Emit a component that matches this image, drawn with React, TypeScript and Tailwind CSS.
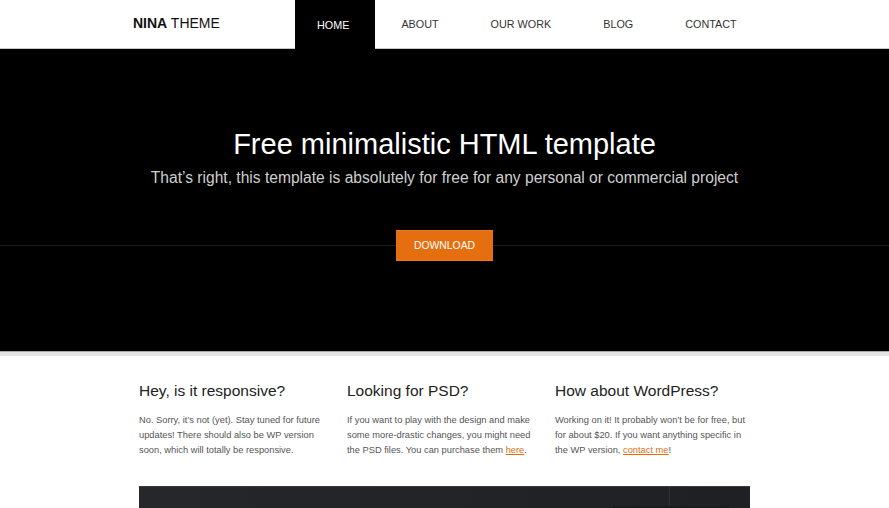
import React from 'react';

const navItems = ['Home', 'About', 'Our Work', 'Blog', 'Contact'];

const columns = [
  {
    title: 'Hey, is it responsive?',
    body: (
      <>No. Sorry, it’s not (yet). Stay tuned for future updates! There should also be WP version soon, which will totally be responsive.</>
    ),
  },
  {
    title: 'Looking for PSD?',
    body: (
      <>
        If you want to play with the design and make some more-drastic changes, you might need the PSD files. You can purchase them{' '}
        <a href="#" className="text-[#e56e0f] underline">here</a>.
      </>
    ),
  },
  {
    title: 'How about WordPress?',
    body: (
      <>
        Working on it! It probably won’t be for free, but for about $20. If you want anything specific in the WP version,{' '}
        <a href="#" className="text-[#e56e0f] underline">contact me</a>!
      </>
    ),
  },
];

const App = () => {
  return (
    <div className="min-h-[508px] bg-white font-['Liberation_Sans',Arial,sans-serif] overflow-hidden">
      {/* header */}
      <header className="h-[49px] bg-white border-b border-[#c8c8c8]">
        <div className="flex h-full items-start">
          <div className="w-[295px] pl-[133px] pt-[15px] text-[14px] leading-[17px] text-[#111] whitespace-nowrap">
            <span className="font-bold">NINA</span> THEME
          </div>
          <ul className="flex gap-[4px] h-full">
            {navItems.map((item, i) => (
              <li
                key={item}
                className={
                  i === 0
                    ? 'h-[49px] pl-[22px] pr-[26px] bg-black text-white text-[10.8px] uppercase flex items-center whitespace-nowrap pt-px'
                    : 'h-[48px] pl-[22px] pr-[26px] text-[#333] text-[10.8px] uppercase flex items-center whitespace-nowrap pt-px'
                }
              >
                {item}
              </li>
            ))}
          </ul>
        </div>
      </header>

      {/* hero */}
      <section className="bg-black h-[302px] pt-[78px] text-center">
        <h1 className="text-[29px] leading-[34px] text-white">Free minimalistic HTML template</h1>
        <p className="mt-[7px] text-[15.6px] leading-[20px] text-[#cfcfcf]">
          That’s right, this template is absolutely for free for any personal or commercial project
        </p>
        <div className="mt-[42px] flex items-center">
          <div className="flex-1 h-px bg-[#1c1c1c]" />
          <button className="w-[97px] h-[31px] bg-[#e56e0f] border-y border-[#f07a18] text-white text-[10.4px] uppercase">
            Download
          </button>
          <div className="flex-1 h-px bg-[#1c1c1c]" />
        </div>
      </section>
      <div className="h-[5px] bg-[#e4e4e4] border-t border-[#a8a8a8]" />

      {/* features */}
      <section className="w-[611px] mx-auto pt-[25px]">
        <div className="grid grid-cols-3 gap-[13px]">
          {columns.map((col) => (
            <div key={col.title} className="w-[195px]">
              <h2 className="text-[15.5px] leading-[19px] text-[#222]">{col.title}</h2>
              <p className="mt-[13px] text-[9.3px] leading-[15px] text-[#555]">{col.body}</p>
            </div>
          ))}
        </div>

        <div className="mt-[28px] h-[40px] flex bg-gradient-to-r from-[#26272b] to-[#1f2024] border-t border-[#3a3b3f]">
          <div className="w-[531px] border-r border-[#303136]" />
          <div className="flex-1 flex flex-col">
            <div className="h-[19px]" />
            <div className="ml-[-57px] w-[117px] h-[20px] bg-[#1a1b1e]" />
          </div>
        </div>
      </section>
    </div>
  );
};

export default App;
